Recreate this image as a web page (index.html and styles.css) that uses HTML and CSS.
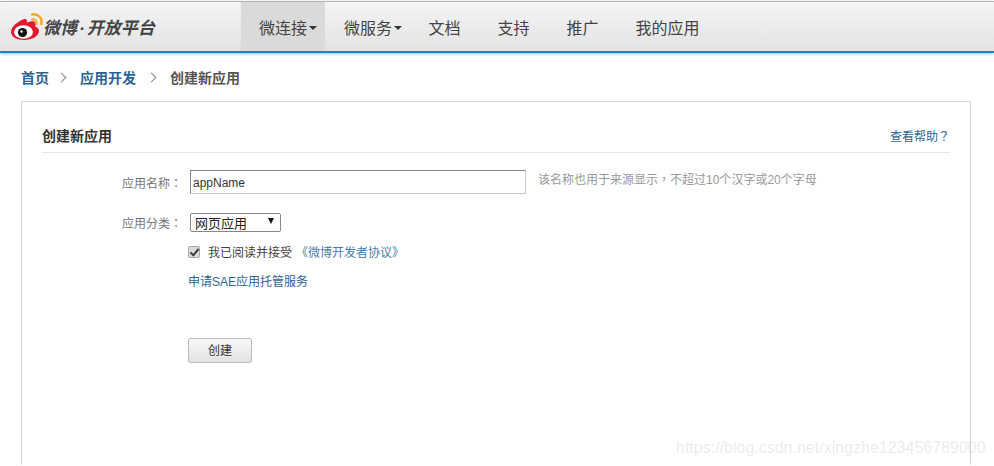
FILE: index.html
```html
<!DOCTYPE html>
<html lang="zh">

<head>
    <meta charset="utf-8">
    <title>创建新应用</title>
    <link rel="stylesheet" href="styles.css">
</head>

<body>
    <div class="navbar">
        <div class="logo">
            <svg class="logo-icon" width="34" height="30" viewBox="0 0 34 30">
                <path d="M14 8C9 10 1 15 1 21c0 5 6 8 13 8 8 0 15-4 15-9 0-3-3-4-4-4.500 1-2 1-4-1-5-2-.7-5 .2-7 1.200 .5-2 0-4-3-3.700z" fill="#e6162d"/>
                <ellipse cx="13.500" cy="21" rx="9.500" ry="6.800" fill="#fff"/>
                <circle cx="12.500" cy="21.500" r="4.600" fill="#111"/>
                <circle cx="11.500" cy="20.500" r="1.200" fill="#fff"/>
                <path d="M22 8.500c3-.8 5 1.500 4.500 4.500" fill="none" stroke="#f5a623" stroke-width="2" stroke-linecap="round"/>
                <path d="M22 3.500c6-1.300 10.500 3.500 9.300 9.500" fill="none" stroke="#f5a623" stroke-width="2.400" stroke-linecap="round"/>
            </svg>
            <span class="logo-text">微博<span class="logo-dot">·</span>开放平台</span>
        </div>
        <ul class="nav-links">
            <li class="active has-arrow"><a href="#">微连接</a></li>
            <li class="has-arrow"><a href="#">微服务</a></li>
            <li><a href="#">文档</a></li>
            <li><a href="#">支持</a></li>
            <li><a href="#">推广</a></li>
            <li><a href="#">我的应用</a></li>
        </ul>
    </div>

    <div class="breadcrumb">
        <a href="#">首页</a>
        <span class="crumb-sep"></span>
        <a href="#">应用开发</a>
        <span class="crumb-sep crumb-sep-wide"></span>
        <span class="crumb-current">创建新应用</span>
    </div>

    <div class="card">
        <div class="card-title">
            <h2>创建新应用</h2>
            <a href="#">查看帮助<span class="punct" lang="zh-TW">？</span></a>
        </div>

        <form class="app-form">
            <div class="form-row name-row">
                <label for="appName">应用名称<span class="punct" lang="zh-TW">：</span></label>
                <input type="text" id="appName" value="appName">
                <span class="hint">该名称也用于来源显示<span class="punct" lang="zh-TW">，</span>不超过10个汉字或20个字母</span>
            </div>
            <div class="form-row type-row">
                <label for="appType">应用分类<span class="punct" lang="zh-TW">：</span></label>
                <div class="select-box">
                    <select id="appType">
                        <option>网页应用</option>
                    </select>
                </div>
            </div>
            <div class="agree-row">
                <input type="checkbox" id="agree" checked>
                <label for="agree">我已阅读并接受</label>
                <a href="#">《微博开发者协议》</a>
            </div>
            <div class="sae-row"><a href="#">申请SAE应用托管服务</a></div>
            <button type="button" class="create-btn">创建</button>
        </form>
    </div>

    <div class="watermark">https://blog.csdn.net/xingzhe123456789000</div>
</body>

</html>
```

FILE: styles.css
```css
html,
body {
    height: 466px;
    overflow: hidden;
}

body {
    margin: 0;
    position: relative;
    background-color: #fff;
    color: #333;
    font-family: "Liberation Sans", "Noto Sans CJK SC", sans-serif;
    font-size: 12px;
}

a {
    color: #2a6496;
    text-decoration: none;
}

/* centred full-width punctuation, as on the original */
.punct {
    font-family: "Noto Sans CJK TC", sans-serif;
}

.navbar {
    box-sizing: border-box;
    height: 52px;
    margin-top: 1px;
    display: flex;
    border-top: 1px solid #b5b5b5;
    border-bottom: 2px solid #0f86d2;
    background: linear-gradient(#f4f4f4, #e3e3e3);
    box-shadow: 0 1px 3px #bbb;
}

.logo {
    width: 241px;
    display: flex;
    align-items: center;
    padding-left: 10px;
    box-sizing: border-box;
}

.logo-icon {
    flex: none;
    margin-top: -1px;
}

.logo-text {
    margin-left: -1px;
    font-size: 17px;
    font-weight: bold;
    font-style: italic;
    color: #444;
    white-space: nowrap;
}

.logo-dot {
    margin: 0 2px;
}

.nav-links {
    list-style: none;
    display: flex;
    margin: 0;
    padding: 0;
}

.nav-links li {
    padding: 0 18.500px;
    display: flex;
    align-items: center;
}

.nav-links li a {
    font-size: 16px;
    color: #444;
}

.nav-links li.has-arrow {
    padding-left: 18px;
    padding-right: 8px;
}

.nav-links li.has-arrow::after {
    content: "";
    margin: 2px 0 0 2px;
    border-top: 4px solid #333;
    border-left: 4px solid transparent;
    border-right: 4px solid transparent;
}

.nav-links li.active {
    background-color: #dadada;
    margin-right: 1px;
}

.breadcrumb {
    display: flex;
    align-items: center;
    height: 20px;
    margin: 14px 0 0 21px;
    font-size: 14px;
    font-weight: bold;
}

.crumb-sep {
    width: 6px;
    height: 6px;
    margin: 0 15px 0 9px;
    border-top: 1px solid #888;
    border-right: 1px solid #888;
    transform: rotate(45deg);
}

.crumb-sep-wide {
    margin: 0 15px 0 12px;
}

.crumb-current {
    color: #555;
}

.card {
    box-sizing: border-box;
    width: 950px;
    height: 364px;
    margin: 14px 0 0 21px;
    padding: 0 20px;
    border: 1px solid #d4d4d4;
    border-bottom: none;
}

.card-title {
    display: flex;
    justify-content: space-between;
    align-items: center;
    height: 50px;
    border-bottom: 1px solid #e8e8e8;
}

.card-title h2 {
    margin: 16px 0 0;
    font-size: 14px;
    font-weight: bold;
    color: #333;
}

.card-title a {
    margin-top: 16px;
    font-size: 12px;
    white-space: nowrap;
}

.app-form {
    padding-left: 80px;
}

.form-row {
    display: flex;
    align-items: center;
}

.form-row label {
    width: 68px;
    color: #777;
    white-space: nowrap;
}

.name-row {
    margin-top: 17px;
}

.name-row input {
    box-sizing: border-box;
    width: 336px;
    height: 24px;
    padding: 1px 2px 0;
    border: 1px solid #c8c8c8;
    border-top-color: #888;
    border-left-color: #888;
    font-family: inherit;
    font-size: 12px;
    color: #333;
}

.hint {
    margin: 0 0 7px 12px;
    color: #999;
}

.type-row {
    margin-top: 19px;
}

.select-box {
    position: relative;
    width: 91px;
    height: 19px;
}

.select-box::after {
    content: "";
    position: absolute;
    left: 78px;
    top: 5px;
    border-top: 6px solid #111;
    border-left: 3px solid transparent;
    border-right: 3px solid transparent;
}

.select-box select {
    appearance: none;
    box-sizing: border-box;
    display: block;
    width: 91px;
    height: 19px;
    padding: 1px 0 0 4px;
    border: 1px solid #888;
    border-radius: 2px;
    background-color: #fff;
    font-family: inherit;
    font-size: 13px;
    line-height: 17px;
    color: #222;
}

.agree-row {
    display: flex;
    align-items: center;
    height: 14px;
    margin: 13px 0 0 66px;
    color: #444;
}

.agree-row input {
    appearance: none;
    box-sizing: border-box;
    position: relative;
    width: 12px;
    height: 12px;
    margin: 0 8px 0 0;
    border: 1px solid #aaa;
    border-radius: 2px;
    background-color: #dcdcdc;
}

.agree-row input:checked::after {
    content: "";
    position: absolute;
    left: 3px;
    top: 0;
    width: 3px;
    height: 7px;
    border-right: 2px solid #444;
    border-bottom: 2px solid #444;
    transform: rotate(40deg);
}

.agree-row label {
    margin-top: -1px;
}

.agree-row a {
    margin: -1px 0 0 4px;
    color: #4a7ca8;
}

.sae-row {
    margin: 14px 0 0 66px;
    line-height: 18px;
}

.create-btn {
    display: block;
    box-sizing: border-box;
    width: 64px;
    height: 25px;
    margin: 47px 0 0 66px;
    padding: 0 0 2px;
    border: 1px solid #bdbdbd;
    border-radius: 2px;
    background: linear-gradient(#f8f8f8, #e2e2e2);
    font-family: inherit;
    font-size: 12px;
    color: #333;
}

.watermark {
    position: absolute;
    left: 676px;
    top: 439px;
    font-size: 16px;
    color: rgba(150, 150, 150, 0.2);
    white-space: nowrap;
}
```
